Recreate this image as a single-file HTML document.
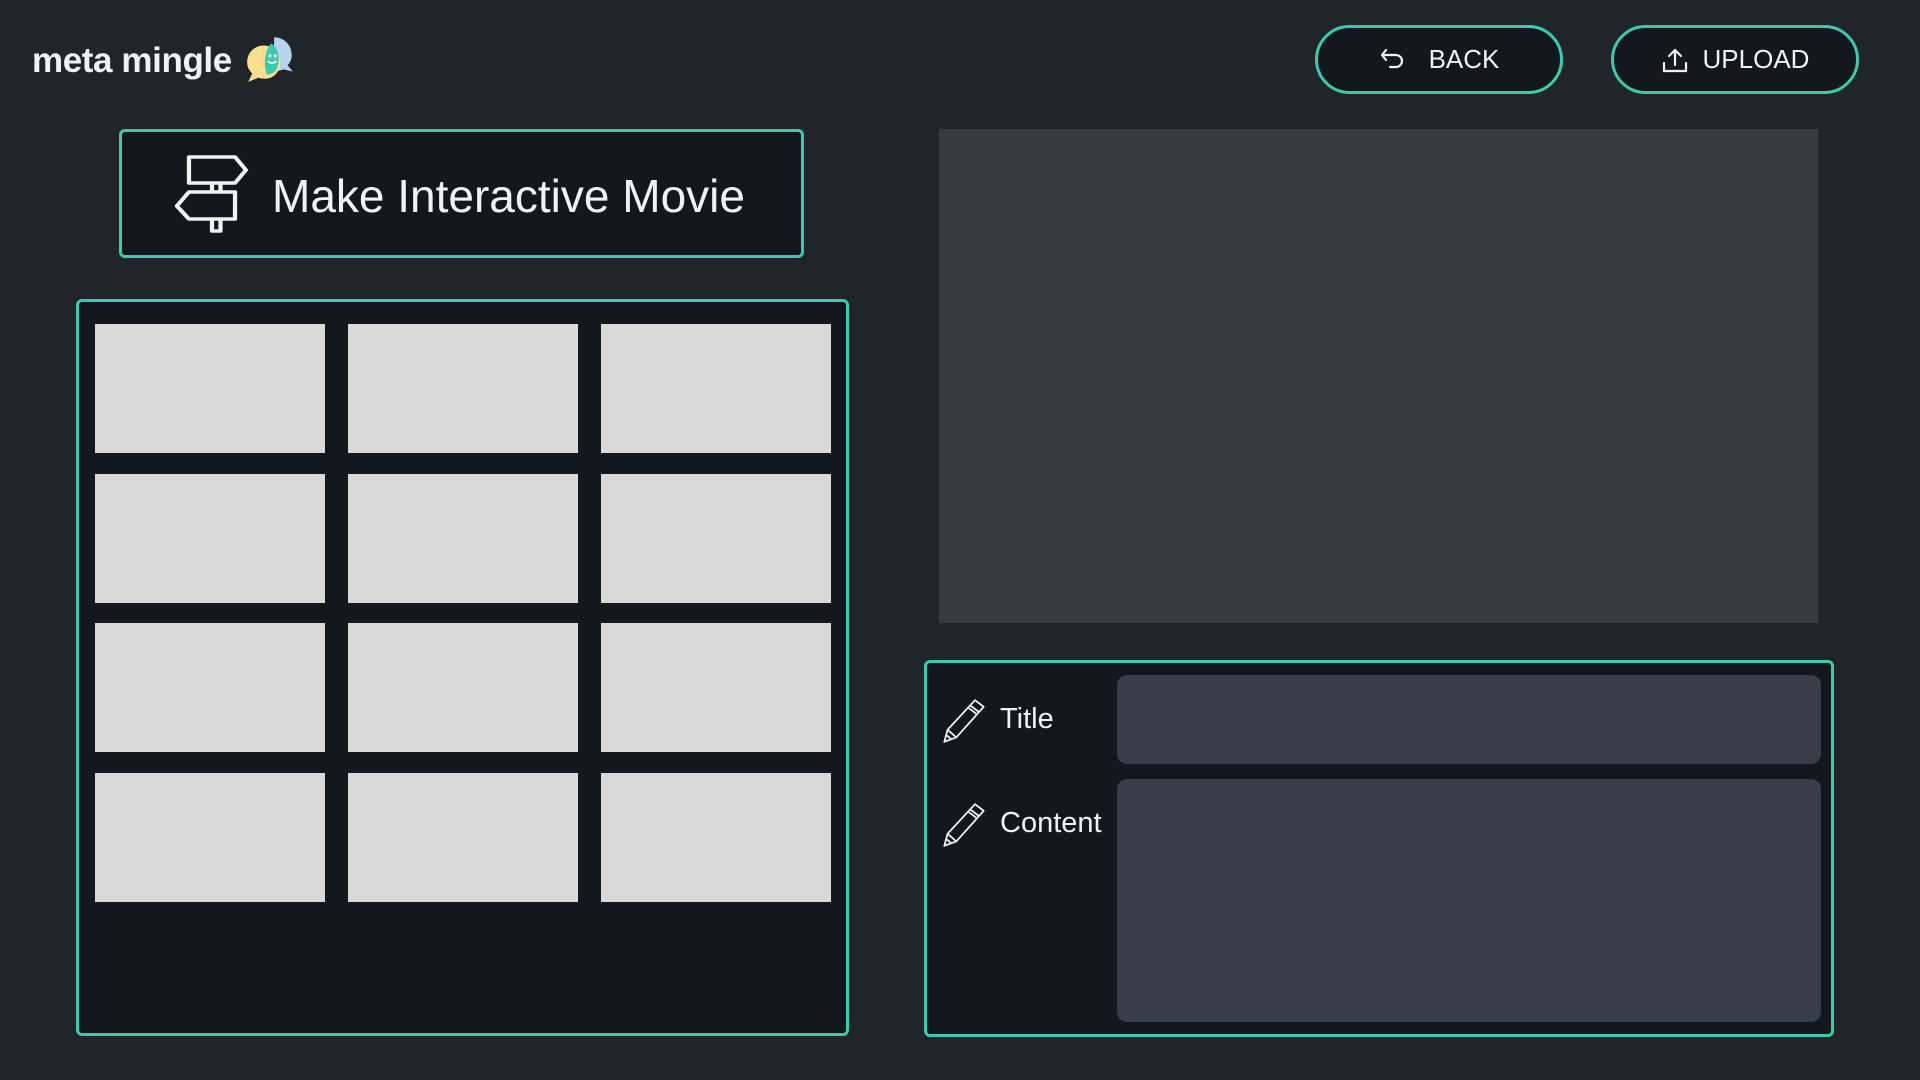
<!DOCTYPE html>
<html><head><meta charset="utf-8"><style>
*{margin:0;padding:0;box-sizing:border-box}
body{width:1920px;height:1080px;background:#1f2529;position:relative;overflow:hidden;font-family:"Liberation Sans",sans-serif;color:#f2f2f2}
.abs{position:absolute}
.teal{border:3px solid #3cc9b0;background:#13171e}
.btn{border-radius:40px;display:flex;align-items:center;justify-content:center;font-size:26px;gap:22px}
.cell{position:absolute;width:230px;height:129px;background:#d9d9d9}
.inp{position:absolute;background:#373e47;border-radius:10px}
.lbl{position:absolute;font-size:29px;display:flex;align-items:center;gap:20px}
</style></head><body>
<div class="abs" style="left:32px;top:41px;font-size:35px;font-weight:bold;letter-spacing:-0.4px">meta mingle</div>
<svg class="abs" style="left:243px;top:34px" width="56" height="50" viewBox="0 0 54 46">
<path d="M30 2c10 0 17 8 17 17 0 5-2 8-4 10l5 6-9-2c-3 1-6 2-9 2z" fill="#b7d4ee"/>
<path d="M20 10c-9 0-16 7-16 16 0 5 2 8 5 11l-4 8 10-4c2 1 4 1 6 1 9 0 15-7 15-16s-7-16-16-16z" fill="#f9df8e"/>
<path d="M27 8c8 4 10 18 4 27-3 2-5 3-8 3-3-8-3-22 4-30z" fill="#3cc9b0"/>
<circle cx="26" cy="20" r="1.5" fill="#fff"/><circle cx="31" cy="20" r="1.5" fill="#fff"/>
<path d="M24 25q4 4 8 0" stroke="#fff" stroke-width="1.5" fill="none"/>
</svg>
<div class="abs teal btn" style="left:1315px;top:25px;width:248px;height:69px">
<svg width="28" height="26" viewBox="0 0 28 26" fill="none" stroke="#f2f2f2" stroke-width="2.2" stroke-linecap="round" stroke-linejoin="round"><path d="M7 3 3 8l4 5M3 8h14a6 6 0 0 1 0 12h-6"/></svg><span>BACK</span></div>
<div class="abs teal btn" style="left:1611px;top:25px;width:248px;height:69px;gap:14px">
<svg width="28" height="28" viewBox="0 0 28 28" fill="none" stroke="#f2f2f2" stroke-width="2.2" stroke-linecap="round" stroke-linejoin="round"><path d="M14 19V4M8 10l6-6 6 6M3 17v8h22v-8"/></svg><span>UPLOAD</span></div>
<div class="abs teal" style="left:119px;top:129px;width:685px;height:129px;border-radius:6px">
<svg class="abs" style="left:50px;top:22px" width="80" height="82" viewBox="0 0 66 82" preserveAspectRatio="none" fill="none" stroke="#f2f2f2" stroke-width="3.5" stroke-linejoin="round"><path d="M14 3h38l9 13-9 13H14zM33 29v9M40 29v9M14 38h38v27H14L4 52zM33 65v12h7V65"/></svg>
<div class="abs" style="left:150px;top:37px;font-size:46px">Make Interactive Movie</div>
</div>
<div class="abs teal" style="left:76px;top:299px;width:773px;height:737px;border-radius:6px"></div>
<div class="cell" style="left:95px;top:324px"></div><div class="cell" style="left:348px;top:324px"></div><div class="cell" style="left:601px;top:324px"></div>
<div class="cell" style="left:95px;top:474px"></div><div class="cell" style="left:348px;top:474px"></div><div class="cell" style="left:601px;top:474px"></div>
<div class="cell" style="left:95px;top:623px"></div><div class="cell" style="left:348px;top:623px"></div><div class="cell" style="left:601px;top:623px"></div>
<div class="cell" style="left:95px;top:773px"></div><div class="cell" style="left:348px;top:773px"></div><div class="cell" style="left:601px;top:773px"></div>
<div class="abs" style="left:939px;top:129px;width:879px;height:494px;background:#383b3f"></div>
<div class="abs teal" style="left:924px;top:660px;width:910px;height:377px;border-radius:6px"></div>
<div class="inp" style="left:1117px;top:675px;width:704px;height:89px"></div>
<div class="inp" style="left:1117px;top:779px;width:704px;height:243px"></div>
<svg class="abs" style="left:942px;top:698px" width="44" height="46" viewBox="0 0 40 42" fill="none" stroke="#f2f2f2" stroke-width="1.6" stroke-linejoin="round"><path d="M30 2l8 6-25 28-11 4 3-11zM26 7l8 6M24 9l8 6M5 29l8 7M4 34l4 3"/></svg>
<div class="lbl" style="left:1000px;top:703px">Title</div>
<svg class="abs" style="left:942px;top:802px" width="44" height="46" viewBox="0 0 40 42" fill="none" stroke="#f2f2f2" stroke-width="1.6" stroke-linejoin="round"><path d="M30 2l8 6-25 28-11 4 3-11zM26 7l8 6M24 9l8 6M5 29l8 7M4 34l4 3"/></svg>
<div class="lbl" style="left:1000px;top:807px">Content</div>
</body></html>
